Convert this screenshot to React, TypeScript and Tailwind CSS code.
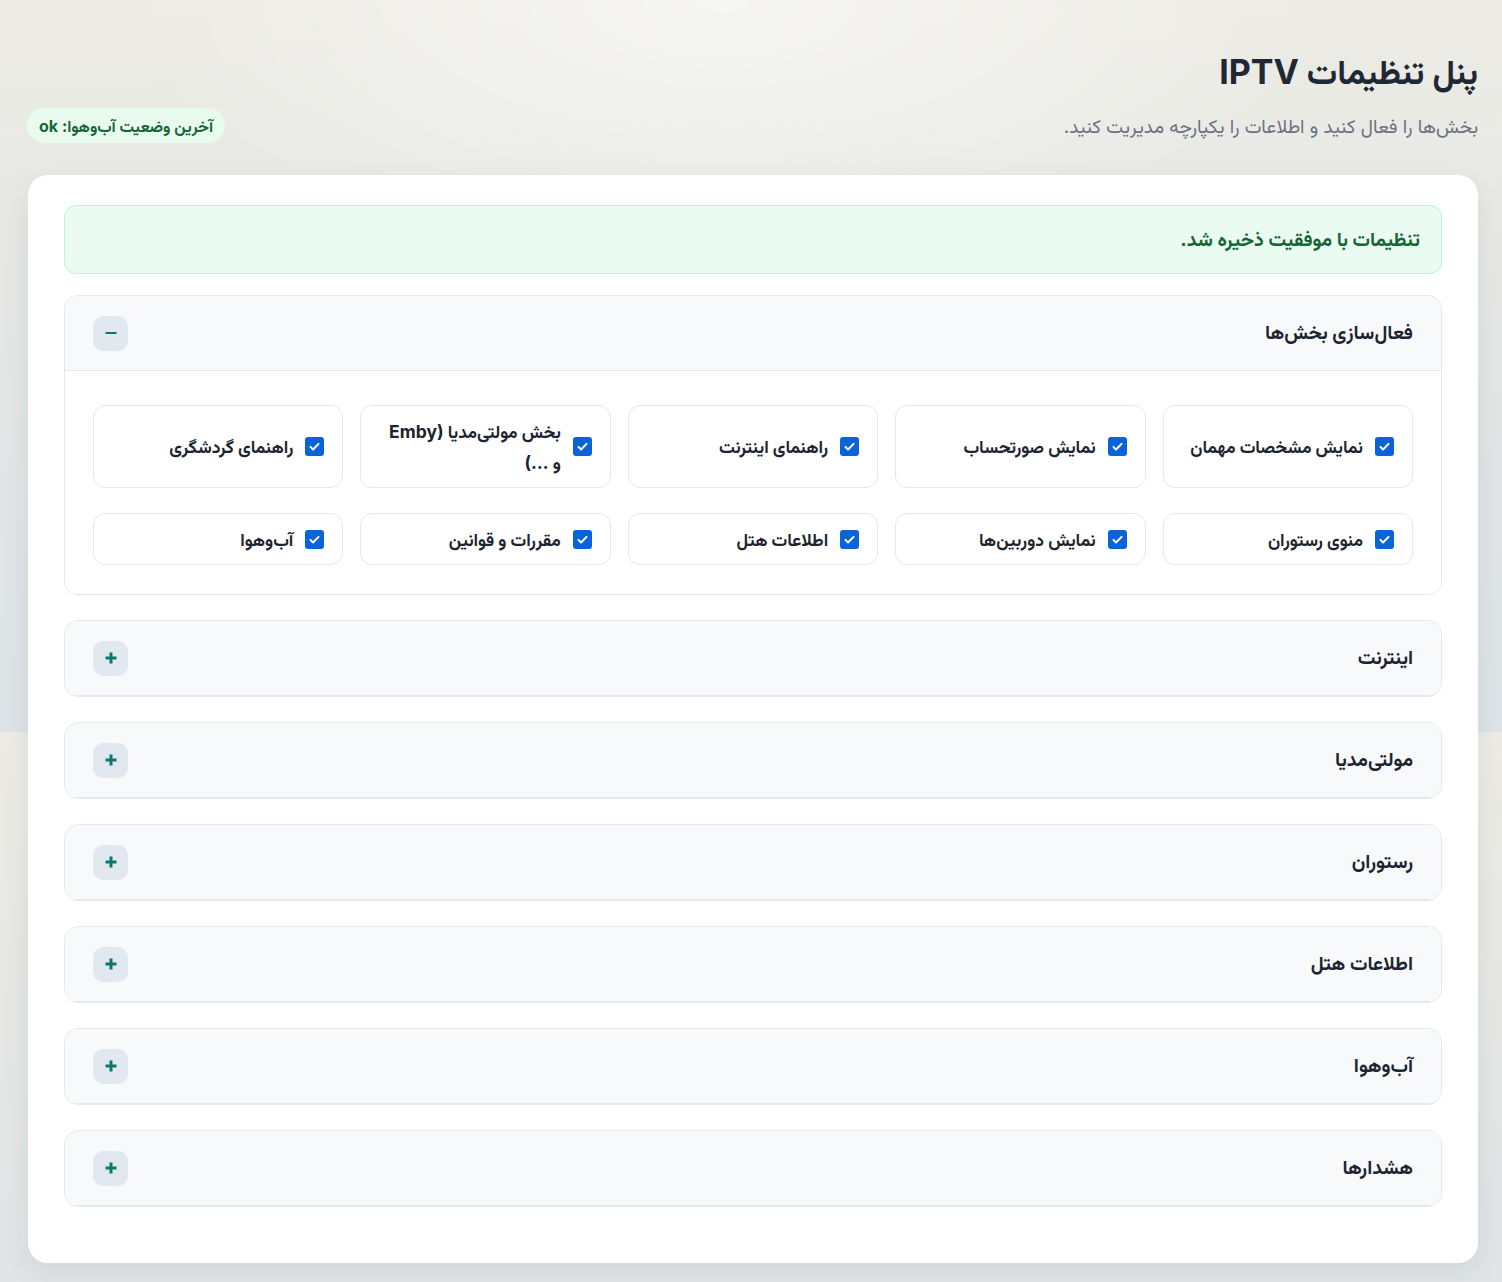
import { useState } from "react"

/* ----------------------------------------------------------------
 * Data
 * ---------------------------------------------------------------- */

const sections = [
  "نمایش مشخصات مهمان",
  "نمایش صورتحساب",
  "راهنمای اینترنت",
  "بخش مولتی‌مدیا (Emby و\u00A0…)",
  "راهنمای گردشگری",
  "منوی رستوران",
  "نمایش دوربین‌ها",
  "اطلاعات هتل",
  "مقررات و قوانین",
  "آب‌وهوا",
]

const panels = [
  "اینترنت",
  "مولتی‌مدیا",
  "رستوران",
  "اطلاعات هتل",
  "آب‌وهوا",
  "هشدارها",
]

/* ----------------------------------------------------------------
 * Pieces
 * ---------------------------------------------------------------- */

function ToggleIcon({ open }: { open: boolean }) {
  return (
    <svg width="12" height="12" viewBox="0 0 12 12" className="text-[#0f766e]">
      <path d="M0.5 6h11" stroke="currentColor" strokeWidth={open ? 2.2 : 3} />
      {!open && <path d="M6 0.5v11" stroke="currentColor" strokeWidth="3" />}
    </svg>
  )
}

function CheckItem({ label }: { label: string }) {
  const [checked, setChecked] = useState(true)

  return (
    <label className="flex items-center gap-[12px] rounded-xl border border-[#e3e7ee] bg-white py-[9.5px] pl-[14px] pr-[18px] cursor-pointer">
      <span
        onClick={() => setChecked(!checked)}
        className={
          "flex h-[19px] w-[19px] shrink-0 items-center justify-center rounded-[3px] " +
          (checked ? "bg-[#0b63d9]" : "border border-gray-400 bg-white")
        }
      >
        {checked && (
          <svg width="13" height="13" viewBox="0 0 16 16" fill="none">
            <path d="M3 8.5l3.2 3.2L13 4.8" stroke="white" strokeWidth="2.4" strokeLinecap="round" strokeLinejoin="round" />
          </svg>
        )}
      </span>
      <span className="text-[17.5px] font-bold leading-[31px] text-[#1c2430]">{label}</span>
    </label>
  )
}

function Panel({ title, defaultOpen = false, children }: { title: string; defaultOpen?: boolean; children?: React.ReactNode }) {
  const [open, setOpen] = useState(defaultOpen)

  return (
    <div className="overflow-hidden rounded-[14px] border border-[#e3e7ee]">
      <div className="flex h-[75px] items-center justify-between border-b border-[#e3e7ee] bg-[#f8f9fb] px-[28px]">
        <h2 className="text-[19.5px] font-bold text-[#1c2430]">{title}</h2>
        <button
          onClick={() => setOpen(!open)}
          className="flex h-[35px] w-[35px] items-center justify-center rounded-[10px] bg-[#e2e8f0]"
        >
          <ToggleIcon open={open} />
        </button>
      </div>
      {open && children}
    </div>
  )
}

/* ----------------------------------------------------------------
 * Page
 * ---------------------------------------------------------------- */

export default function App() {
  return (
    <div
      dir="rtl"
      className="min-h-screen bg-[radial-gradient(ellipse_40%_35%_at_48%_0%,rgba(255,255,255,0.55),transparent),linear-gradient(180deg,#ecebe5_0%,#e4e6e6_55%,#dde3e6_100%)] bg-size-[100%_732px] pb-[20px] pl-[28px] pr-[24px] pt-[46px] font-['Inter','Vazirmatn','Noto_Sans_Arabic','DejaVu_Sans',sans-serif]"
    >
      {/* Header */}
      <div className="flex items-end justify-between">
        <div className="mb-[4px]">
          <h1 className="text-[34px] font-bold leading-[52px] text-[#1f2833]">پنل تنظیمات IPTV</h1>
          <p className="mt-[17px] text-[19px] leading-6 text-[#6b7280]">
            بخش‌ها را فعال کنید و اطلاعات را یکپارچه مدیریت کنید.
          </p>
        </div>
        <div className="-ml-px flex h-[35px] items-center rounded-full bg-[#e9fbef] px-[12px] text-[16px] font-bold text-[#166534]">
          آخرین وضعیت آب‌وهوا: ok
        </div>
      </div>

      {/* Card */}
      <div className="mt-[32px] rounded-[20px] bg-white px-[36px] pb-[56px] pt-[30px] shadow-[0_10px_30px_rgba(30,40,60,0.08)]">
        <div className="mb-[21px] flex h-[69px] items-center rounded-xl border border-[#bff3d2] bg-[#eafcf1] px-[21px] text-[19.5px] font-bold text-[#166534]">
          تنظیمات با موفقیت ذخیره شد.
        </div>

        <div className="flex flex-col gap-[25px]">
          <Panel title="فعال‌سازی بخش‌ها" defaultOpen>
            <div className="grid grid-cols-5 gap-x-[17px] gap-y-[25px] bg-white px-[28px] pb-[29px] pt-[34px]">
              {sections.map((s) => (
                <CheckItem key={s} label={s} />
              ))}
            </div>
          </Panel>

          {panels.map((p) => (
            <Panel key={p} title={p} />
          ))}
        </div>
      </div>
    </div>
  )
}
